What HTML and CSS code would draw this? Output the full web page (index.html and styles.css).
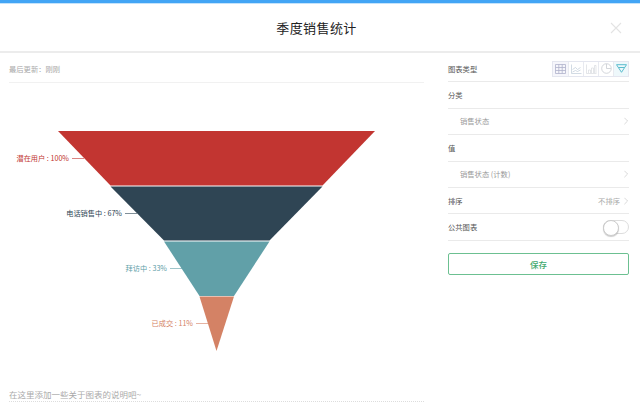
FILE: index.html
```html
<!DOCTYPE html>
<html lang="zh">
<head>
<meta charset="utf-8">
<title>季度销售统计</title>
<link rel="stylesheet" href="styles.css">
</head>
<body>
<div class="topbar"></div>
<header class="header">
  <h1 class="title">季度销售统计</h1>
  <svg class="close" viewBox="0 0 12 12" width="12" height="12"><path d="M1 1 11 11M11 1 1 11" stroke="#e3e3e3" stroke-width="1.1" fill="none"/></svg>
</header>
<main class="main">
  <section class="left">
    <div class="updated">最后更新：刚刚</div>
    <svg class="chart" viewBox="0 0 424 300" width="424" height="300">
      <g transform="translate(-9,-83)">
        <polygon points="58,131 375,131 322.5,185.5 110.5,185.5" fill="#c23531"/>
        <polygon points="110.5,186.5 322.5,186.5 269.5,240.5 164,240.5" fill="#2f4554"/>
        <polygon points="164,241.5 269.5,241.5 234,296 199.5,296" fill="#61a0a8"/>
        <polygon points="199.5,296.5 234,296.5 216.5,351" fill="#d48265"/>
        <path class="leader" d="M72 158.500H84" stroke="#c23531"/>
        <path class="leader" d="M125 213.500H137" stroke="#2f4554"/>
        <path class="leader" d="M170 268.500H182" stroke="#61a0a8"/>
        <path class="leader" d="M196 323.500H208" stroke="#d48265"/>
        <text class="lbl" x="69" y="161" text-anchor="end" fill="#c23531">潜在用户 : 100%</text>
        <text class="lbl" x="122" y="216" text-anchor="end" fill="#2f4554">电话销售中 : 67%</text>
        <text class="lbl" x="167" y="271" text-anchor="end" fill="#61a0a8">拜访中 : 33%</text>
        <text class="lbl" x="193" y="326" text-anchor="end" fill="#d48265">已成交 : 11%</text>
      </g>
    </svg>
    <div class="note">在这里添加一些关于图表的说明吧~</div>
  </section>
  <aside class="side">
    <div class="row">
      <span>图表类型</span>
      <div class="types">
        <span class="type"><svg viewBox="0 0 11 10" width="11" height="10"><path d="M.5.500h10v9H.5zM.5 3.500h10M.5 6.500h10M3.800.5v9M7.200.5v9" fill="none" stroke="#b0b2cc" stroke-width=".8"/></svg></span>
        <span class="type"><svg viewBox="0 0 11 10" width="11" height="10"><path d="M.5.500v9h10M1.500 5.500l3-2 2 2 3-2M1.500 8l3-1.500 2 1 3-1.500" fill="none" stroke="#bfccd9" stroke-width=".7"/></svg></span>
        <span class="type"><svg viewBox="0 0 11 10" width="11" height="10"><path d="M.5.500v9h10M2.500 9V6h2v3M5.500 9V4h2v5M8.500 9V1.500h1.500V9" fill="none" stroke="#d8dbe0" stroke-width=".7"/></svg></span>
        <span class="type"><svg viewBox="0 0 11 11" width="11" height="11"><circle cx="5.500" cy="5.500" r="4.800" fill="none" stroke="#c8ccd2" stroke-width=".8"/><path d="M5.500 1v4.500H10" fill="none" stroke="#c8ccd2" stroke-width=".8"/></svg></span>
        <span class="type active"><svg viewBox="0 0 11 9" width="11" height="9"><path d="M.5.700h10L5.500 8.300zM2.500 3.500h6" fill="none" stroke="#5bbccd" stroke-width="1"/></svg></span>
      </div>
    </div>
    <div class="row"><span>分类</span></div>
    <div class="row sub"><span>销售状态</span><svg class="chev" viewBox="0 0 5 9" width="4" height="8"><path d="M.5.500 4.500 4.500.5 8.500" fill="none" stroke="#cfcfcf"/></svg></div>
    <div class="row"><span>值</span></div>
    <div class="row sub"><span>销售状态 (计数)</span><svg class="chev" viewBox="0 0 5 9" width="4" height="8"><path d="M.5.500 4.500 4.500.5 8.500" fill="none" stroke="#cfcfcf"/></svg></div>
    <div class="row"><span>排序</span><span class="value">不排序<svg class="chev" viewBox="0 0 5 9" width="4" height="8"><path d="M.5.500 4.500 4.500.5 8.500" fill="none" stroke="#cfcfcf"/></svg></span></div>
    <div class="row"><span>公共图表</span><span class="switch"></span></div>
    <button class="save">保存</button>
  </aside>
</main>
</body>
</html>
```
FILE: styles.css
```css
* { box-sizing: border-box; }
html, body { margin: 0; padding: 0; }
body {
  width: 640px;
  height: 405px;
  overflow: hidden;
  background: #fff;
  font-family: "Noto Sans CJK SC", "Liberation Sans", sans-serif;
  color: #555;
}
.topbar { height: 4px; background: #42a5f5; border-bottom: 1px solid #c4e3fb; }
.header {
  position: relative;
  height: 49px;
  border-bottom: 2px solid #ececec;
  display: flex;
  align-items: center;
  justify-content: center;
}
.title {
  margin: 0 7px 0 0;
  font-size: 13px;
  font-weight: 400;
  letter-spacing: .4px;
  color: #222;
}
.close { position: absolute; right: 18px; top: 18px; }
.main { display: flex; }
.left { width: 432px; padding: 0 8px 0 9px; }
.updated {
  height: 30px;
  line-height: 32px;
  font-size: 7.300px;
  color: #aaa;
  border-bottom: 1px solid #f1f1f1;
}
.chart { display: block; }
.leader { opacity: .6; }
.lbl { font-size: 7.200px; font-family: "Noto Sans CJK SC", "Liberation Sans", sans-serif; }
.note {
  height: 15px;
  margin-top: 4px;
  line-height: 14px;
  font-size: 8.500px;
  color: #aaa;
  border-bottom: 1px dotted #ddd;
}
.side { width: 181px; margin-left: 16px; padding-top: 3px; }
.row {
  height: 26.400px;
  display: flex;
  align-items: center;
  justify-content: space-between;
  font-size: 7.300px;
  color: #555;
  border-bottom: 1px solid #eaeaea;
}
.row.sub { padding-left: 12px; color: #999; }
.value { display: flex; align-items: center; gap: 4px; color: #aaa; }
.chev { display: block; margin-right: 1px; }
.types { display: flex; border: 1px solid #e4e6ef; height: 16px; }
.type {
  width: 15px;
  display: flex;
  align-items: center;
  justify-content: center;
  border-left: 1px solid #e8eaf0;
}
.type:first-child { border-left: 0; background: #f6f6fb; }
.type.active { background: #eef8fb; }
.type svg { display: block; }
.switch {
  width: 26px;
  height: 14px;
  border: 1px solid #ddd;
  border-radius: 7px;
  position: relative;
  background: #fff;
}
.switch::before {
  content: "";
  position: absolute;
  left: -1px;
  top: -1px;
  width: 14px;
  height: 14px;
  border-radius: 50%;
  background: #fff;
  border: 1px solid #ccc;
  box-shadow: 0 1px 1px rgba(0,0,0,.2);
}
.save {
  display: block;
  width: 100%;
  height: 22px;
  margin-top: 12px;
  padding: 0;
  background: #fff;
  border: 1px solid #6cc091;
  border-radius: 2px;
  color: #3fa96e;
  font: 500 8.500px "Noto Sans CJK SC", sans-serif;
}
```
